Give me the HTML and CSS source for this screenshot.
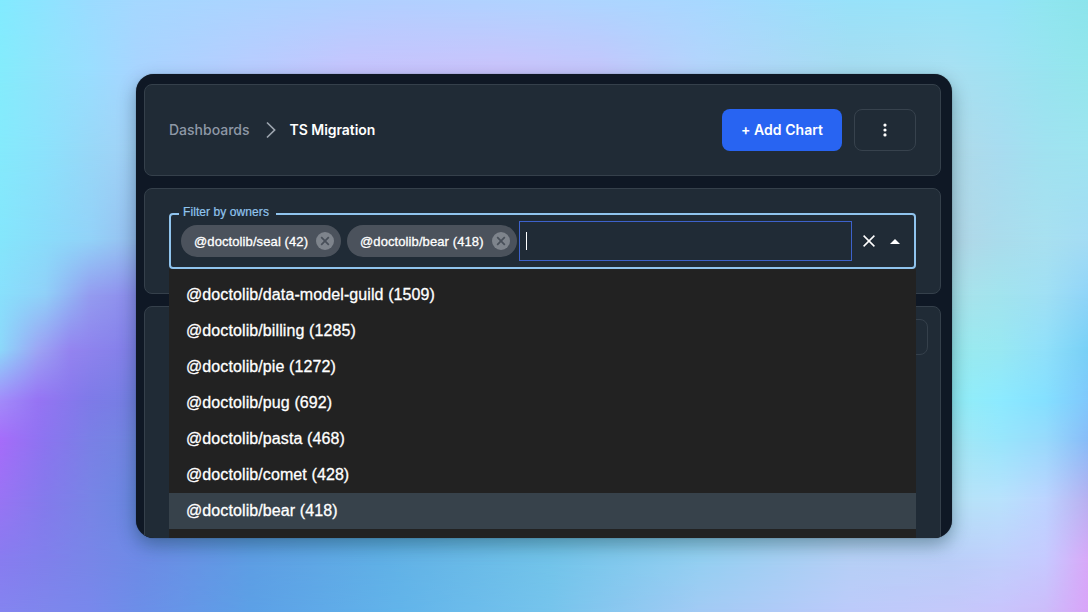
FILE: index.html
```html
<!DOCTYPE html>
<html lang="en">
<head>
<meta charset="utf-8">
<title>TS Migration</title>
<link rel="stylesheet" href="styles.css">
</head>
<body>
<div class="backdrop"><i class="r0"></i><i class="r1"></i><i class="r2"></i><i class="r3"></i><i class="r4"></i><i class="r5"></i><i class="r6"></i><i class="r7"></i><i class="r8"></i><i class="r9"></i><i class="r10"></i></div>
<main class="window">
  <header class="card header">
    <nav class="crumbs">
      <span class="crumb">Dashboards</span>
      <svg class="chevron" width="10" height="18" viewBox="0 0 10 18"><path d="M1 1.5 8.6 9 1 16.5"/></svg>
      <span class="crumb current">TS Migration</span>
    </nav>
    <div class="actions">
      <button class="btn primary">+ Add Chart</button>
      <button class="btn more" aria-label="More"><svg width="6" height="14" viewBox="0 0 6 14"><circle cx="3" cy="2.1" r="1.6"/><circle cx="3" cy="7" r="1.6"/><circle cx="3" cy="11.9" r="1.6"/></svg></button>
    </div>
  </header>
  <section class="card filter">
    <fieldset class="select">
      <legend><span>Filter by owners</span></legend>
      <div class="field">
        <span class="chip">@doctolib/seal (42)<svg class="remove" width="18" height="18" viewBox="0 0 18 18"><circle cx="9" cy="9" r="9"/><path d="M5.2 5.2l7.6 7.6M12.8 5.2l-7.6 7.6"/></svg></span>
        <span class="chip wide">@doctolib/bear (418)<svg class="remove" width="18" height="18" viewBox="0 0 18 18"><circle cx="9" cy="9" r="9"/><path d="M5.2 5.2l7.6 7.6M12.8 5.2l-7.6 7.6"/></svg></span>
        <div class="entry"><i class="caret"></i></div>
        <svg class="clear" width="12" height="12" viewBox="0 0 12 12"><path d="M.6.6l10.8 10.8M11.4.6L.6 11.4"/></svg>
        <svg class="arrow" width="10" height="5" viewBox="0 0 10 5"><path d="M0 5l5-5 5 5z"/></svg>
      </div>
    </fieldset>
    <ul class="menu">
      <li>@doctolib/data-model-guild (1509)</li>
      <li>@doctolib/billing (1285)</li>
      <li>@doctolib/pie (1272)</li>
      <li>@doctolib/pug (692)</li>
      <li>@doctolib/pasta (468)</li>
      <li>@doctolib/comet (428)</li>
      <li class="active">@doctolib/bear (418)</li>
    </ul>
  </section>
  <section class="card chart"><div class="tool"></div></section>
</main>
</body>
</html>
```
FILE: styles.css
```css
* { box-sizing: border-box; }
body {
  margin: 0;
  height: 612px;
  overflow: hidden;
  display: flex;
  justify-content: center;
  align-items: flex-start;
  padding-top: 74px;
  font-family: Inter, sans-serif;
  background: #a0d8f8;
}
/* Colour mesh: each row fades in over the one above it. */
.backdrop { position: absolute; inset: 0; display: grid; }
.backdrop i {
  grid-area: 1 / 1;
  background: linear-gradient(90deg, var(--row));
  mask-image: linear-gradient(transparent var(--from), #000 var(--to));
}
.backdrop .r0 { mask-image: none; --row: #82ebff 0, #8ee4ff 45px, #9bdcff 90px, #a5d8ff 137px, #acd4ff 250px, #b2d0ff 400px, #b0d4ff 550px, #a8d8ff 700px, #98e2fa 850px, #98e4f8 951px, #94e4f8 1000px, #90e6f0 1045px, #8ce4ec 1088px; }
.backdrop .r1 { --from: 0px; --to: 70px; --row: #84ecfc 0, #90e4fc 45px, #9adeff 90px, #a8d4ff 137px, #b8ccff 250px, #c6c4fe 350px, #cac3fc 500px, #c4c6fc 600px, #b4d4fc 700px, #a6dcf0 850px, #a8e0f2 951px, #a0e2f2 1000px, #98e4f0 1045px, #94e6ec 1088px; }
.backdrop .r2 { --from: 70px; --to: 150px; --row: #84eafc 0, #8ce2fc 45px, #98d8f8 90px, #a4d0f6 137px, #b0dae8 951px, #a8dcf0 1000px, #a0e2f0 1045px, #9ee4f0 1088px; }
.backdrop .r3 { --from: 150px; --to: 240px; --row: #84e6fc 0, #8adcfa 45px, #92d2f8 90px, #98bcee 137px, #b2d6e6 951px, #aadcec 1000px, #a8e0f0 1045px, #a4dcf4 1088px; }
.backdrop .r4 { --from: 240px; --to: 295px; --row: #88e0fc 0, #90d0f8 45px, #949cf0 90px, #8c8cec 137px, #aae2ea 951px, #a2e4ee 1000px, #a0e0f4 1045px, #90d4f8 1088px; }
.backdrop .r5 { --from: 295px; --to: 350px; --row: #8cd8fa 0, #9ca4f4 38px, #9484f0 70px, #8080e8 137px, #9aeaee 951px, #98e8f2 1000px, #90e0fa 1045px, #78d0f6 1088px; }
.backdrop .r6 { --from: 350px; --to: 400px; --row: #a28cfa 0, #9674f4 38px, #7e7ae8 90px, #7480e2 137px, #94eef6 951px, #8ceaff 1000px, #84e0ff 1045px, #80c8fc 1088px; }
.backdrop .r7 { --from: 400px; --to: 440px; --row: #a66cfa 0, #8c74f0 45px, #7a80e6 90px, #7086e0 137px, #a4e8f4 951px, #98e6fc 1000px, #98dafc 1045px, #88bcf8 1088px; }
.backdrop .r8 { --from: 440px; --to: 500px; --row: #9874f4 0, #847aec 45px, #7884e6 90px, #6888e0 137px, #5c9ce2 250px, #60b4e6 400px, #76c8e8 550px, #94d8ee 700px, #b0dcf0 850px, #b6e2f6 951px, #b8e2fc 1000px, #bcd4ff 1045px, #b8b0f0 1088px; }
.backdrop .r9 { --from: 500px; --to: 560px; --row: #887cf0 0, #8080ec 45px, #7886e8 90px, #6e8ae6 137px, #5e9ee4 250px, #60b0e6 380px, #72c4ea 550px, #94d0f2 700px, #b6d0f6 850px, #bacef8 951px, #c0d0fc 1000px, #c6caff 1045px, #d8a8f8 1088px; }
.backdrop .r10 { --from: 560px; --to: 612px; --row: #8484f0 0, #7e86ec 45px, #7888ec 90px, #6c8ee8 137px, #5ca0e6 250px, #62b4ea 400px, #76c4ec 550px, #a2caf4 700px, #bccafa 850px, #c4c8fa 951px, #c8c4fc 1000px, #ccbcfa 1045px, #d8a4f8 1088px; }
.window {
  position: relative;
  width: 816px;
  height: 464px;
  padding: 10px 11px 0 8px;
  overflow: hidden;
  border-radius: 18px;
  background: #0f1825;
  box-shadow: 0 0 1px #0009, 0 7px 18px #0b303c66;
  display: flex;
  flex-direction: column;
  gap: 12px;
}
.card {
  flex: none;
  border: 1px solid #35404b;
  border-radius: 8px;
  background: #202b36;
}
.header {
  height: 92px;
  padding: 0 24px;
  display: flex;
  align-items: center;
  justify-content: space-between;
}
.crumbs { display: flex; align-items: center; }
.crumb { margin-top: -1px; font-size: 14px; font-weight: 500; color: #8e98a6; }
.crumb.current { color: #fff; font-weight: 600; letter-spacing: -.05px; }
.chevron { margin: 0 14px 0 16px; fill: none; stroke: #9ca4ae; stroke-width: 1.7; }
.actions { display: flex; gap: 12px; }
.btn {
  height: 42px;
  padding: 0;
  border: 0;
  border-radius: 8px;
  font: 600 14px Inter, sans-serif;
  color: #fff;
  display: flex;
  align-items: center;
  justify-content: center;
}
.primary { width: 120px; padding-bottom: 2px; background: #2864f2; letter-spacing: .05px; }
.more { width: 62px; background: none; border: 1px solid #37424d; }
.more svg { fill: #fff; }
.filter { position: relative; height: 106px; padding: 17px 24px 0; }
.select {
  height: 63px;
  margin: 0;
  padding: 0 10px;
  border: 2px solid #90c4ee;
  border-radius: 4px;
  font-family: "Liberation Sans", sans-serif;
}
.select legend {
  height: 16px;
  margin-left: -2px;
  padding: 0 7px 0 4px;
  font-size: 12px;
  line-height: 12px;
  letter-spacing: .08px;
  color: #90c4ee;
  -webkit-text-stroke: .2px;
}
.field { display: flex; align-items: center; height: 40px; margin-top: -1px; }
.chip {
  width: 160px;
  height: 32px;
  margin-right: 6px;
  padding: 0 7px 0 13px;
  border-radius: 16px;
  background: #4b525c;
  color: #fff;
  font-size: 13px;
  letter-spacing: .1px;
  -webkit-text-stroke: .3px;
  display: flex;
  align-items: center;
  justify-content: space-between;
  white-space: nowrap;
}
.chip.wide { width: 170px; margin-right: 2px; }
.remove { fill: #7e848c; stroke: #484f59; stroke-width: 1.7; }
.remove circle { stroke: none; }
.entry {
  flex: 1;
  height: 40px;
  padding-left: 6px;
  border: 1px solid #3d62cc;
  display: flex;
  align-items: center;
}
.caret { width: 1px; height: 18px; background: #fff; }
.clear { margin: 0 15px 0 11px; fill: none; stroke: #fff; stroke-width: 1.5; }
.arrow { margin-right: 4px; fill: #fff; }
.menu {
  position: absolute;
  z-index: 1;
  top: 80px;
  left: 24px;
  width: 747px;
  height: 290px;
  margin: 0;
  padding: 8px 0;
  list-style: none;
  background: #222;
  color: #fff;
  font: 16px/36px "Liberation Sans", sans-serif;
  letter-spacing: .1px;
  -webkit-text-stroke: .3px;
}
.menu li { height: 36px; padding-left: 17px; }
.menu .active { background: #37424b; }
.chart { height: 260px; padding: 12px; display: flex; justify-content: flex-end; }
.tool { width: 60px; height: 36px; border: 1px solid #35404b; border-radius: 8px; }
```
